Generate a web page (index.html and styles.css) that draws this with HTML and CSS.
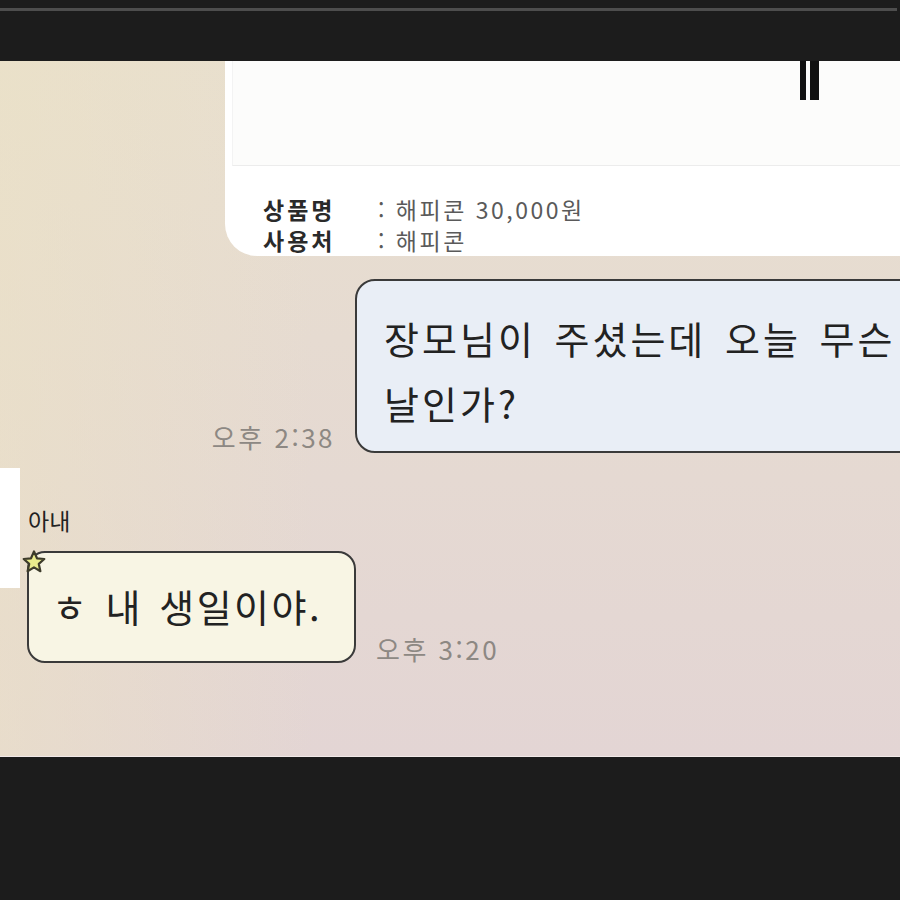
FILE: index.html
```html
<!DOCTYPE html>
<html lang="ko">
<head>
<meta charset="utf-8">
<link rel="stylesheet" href="styles.css">
</head>
<body>
<div class="topline"></div>
<main class="photo">
  <section class="card">
    <div class="coupon">
      <div class="barcode"><span class="bar b1"></span><span class="bar b2"></span></div>
    </div>
    <div class="info">
      <div class="info-row"><span class="label">상품명</span><span class="value">: 해피콘 30,000원</span></div>
      <div class="info-row"><span class="label">사용처</span><span class="value">: 해피콘</span></div>
    </div>
  </section>

  <div class="msg-out">
    <span class="time out-time">오후 2:38</span>
    <div class="bubble blue">장모님이 주셨는데 오늘 무슨<br>날인가?</div>
  </div>

  <div class="msg-in">
    <div class="avatar"></div>
    <div class="in-col">
      <div class="name">아내</div>
      <div class="in-line">
        <div class="bubble yellow">
          <svg class="star" viewBox="0 0 26 26" width="26" height="26">
            <path d="M13 2.5 L16 9.3 L23.3 10 L17.8 14.9 L19.4 22.2 L13 18.4 L6.6 22.2 L8.2 14.9 L2.7 10 L10 9.3 Z" fill="#e9eb8c" stroke="#3d3b2a" stroke-width="2.2" stroke-linejoin="round"/>
          </svg>
          ㅎ 내 생일이야.
        </div>
        <span class="time in-time">오후 3:20</span>
      </div>
    </div>
  </div>
</main>
</body>
</html>
```

FILE: styles.css
```css
* { box-sizing: border-box; }
html, body { margin: 0; padding: 0; }
body {
  background: #1c1c1c;
  width: 900px;
  height: 900px;
  overflow: hidden;
  font-family: "Noto Sans CJK KR", "Noto Sans", sans-serif;
}
.topline {
  margin-top: 8px;
  width: 897px;
  height: 3px;
  background: #4d4d4d;
}
.photo {
  margin-top: 50px;
  height: 696px;
  overflow: hidden;
  background:
    linear-gradient(90deg, rgba(236,226,196,0.55) 0%, rgba(236,226,196,0) 35%),
    linear-gradient(180deg, #e8dfcf 0%, #e6dbd1 40%, #e3d5d4 100%);
  border-bottom: 1px solid #f1e9e8;
  display: flex;
  flex-direction: column;
}
.card {
  margin-left: 225px;
  height: 195px;
  background: #ffffff;
  border-bottom-left-radius: 32px;
  display: flex;
  flex-direction: column;
  padding-left: 7px;
}
.coupon {
  height: 107px;
  background: #fcfcfb;
  border-bottom: 1px solid #ececec;
  border-left: 1px solid #f3f3f3;
  display: flex;
  justify-content: flex-end;
  padding-right: 81px;
}
.barcode {
  display: flex;
  gap: 4px;
  height: 39px;
}
.bar { display: block; background: #111; height: 100%; }
.b1 { width: 6px; }
.b2 { width: 9px; }
.info {
  padding-left: 31px;
  padding-top: 28px;
  display: flex;
  flex-direction: column;
}
.info-row {
  display: flex;
  height: 31px;
  line-height: 31px;
  font-size: 23px;
}
.label {
  width: 115px;
  font-weight: 700;
  color: #2a2a2a;
  letter-spacing: 3px;
}
.value {
  color: #5a5a5a;
  letter-spacing: 2.5px;
}
.msg-out {
  margin-top: 23px;
  display: flex;
  justify-content: flex-end;
  align-items: flex-end;
  gap: 22px;
  margin-right: -20px;
}
.time {
  color: #8d8883;
  font-size: 26px;
  line-height: 28px;
  letter-spacing: 2.5px;
}
.out-time { margin-bottom: 2px; margin-right: -2px; }
.bubble {
  border: 2px solid #3a3a3a;
  color: #222;
  position: relative;
}
.blue {
  width: 565px;
  height: 174px;
  background: #e9eef6;
  border-radius: 20px;
  font-size: 38px;
  line-height: 65px;
  padding: 24px 0 0 27px;
  letter-spacing: 3px;
  word-spacing: 5px;
}
.msg-in {
  margin-top: 15px;
  display: flex;
  align-items: flex-start;
}
.avatar {
  width: 20px;
  height: 120px;
  background: #ffffff;
}
.in-col {
  margin-left: 7px;
  display: flex;
  flex-direction: column;
}
.name {
  margin-top: 36px;
  font-size: 23px;
  line-height: 32px;
  color: #222;
  margin-left: 1px;
}
.in-line {
  margin-top: 15px;
  display: flex;
  align-items: flex-end;
  gap: 20px;
}
.yellow {
  width: 329px;
  height: 112px;
  background: #f8f5e4;
  border-radius: 18px;
  font-size: 38px;
  line-height: 44px;
  padding: 31px 0 0 23px;
  letter-spacing: 2.5px;
  word-spacing: 3px;
}
.star {
  position: absolute;
  left: -8px;
  top: -4px;
}
.in-time { margin-bottom: 0px; }
```
